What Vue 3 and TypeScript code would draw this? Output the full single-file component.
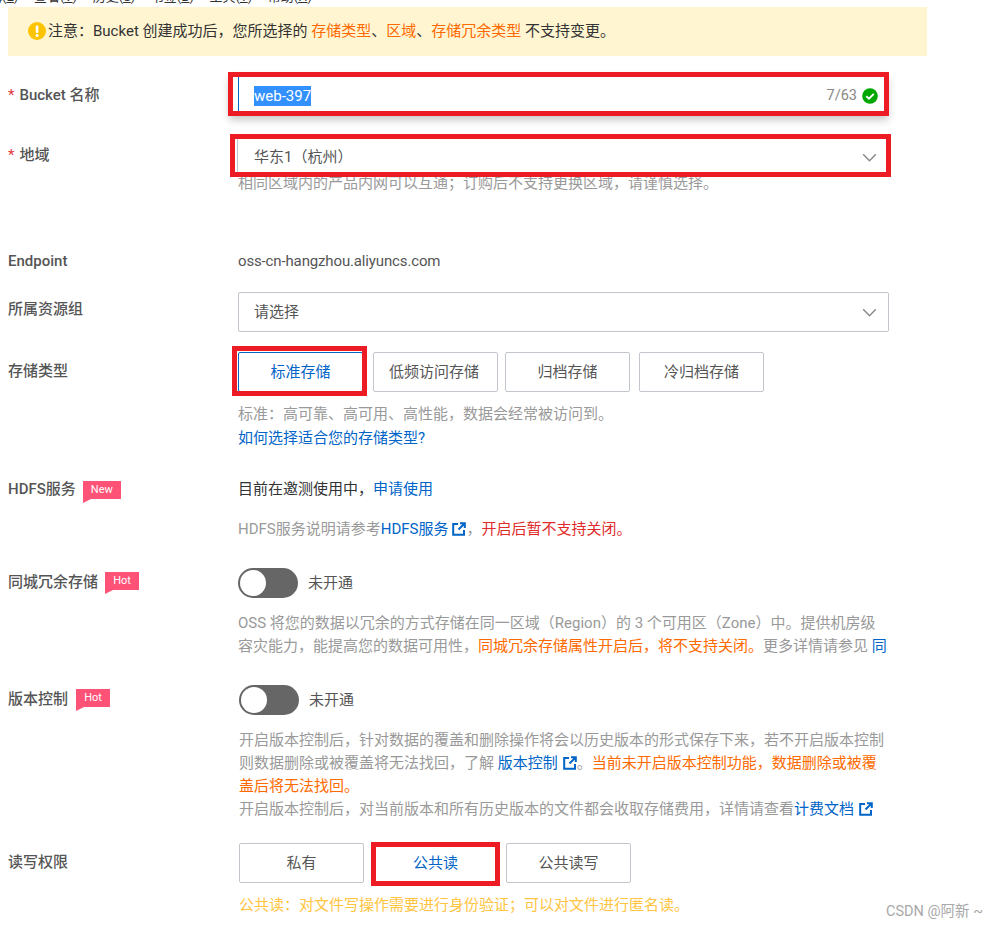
<script setup lang="ts">
const menus = [
  ['编辑', 'E'],
  ['查看', 'V'],
  ['历史', 'S'],
  ['书签', 'B'],
  ['工具', 'T'],
  ['帮助', 'H'],
]
const storageTypes = ['标准存储', '低频访问存储', '归档存储', '冷归档存储']
const permissions = ['私有', '公共读', '公共读写']
</script>

<template>
  <div class="page">
    <div class="menu">
      <span v-for="m in menus" :key="m[0]">{{ m[0] }}(<u>{{ m[1] }}</u>)</span>
    </div>
    <div class="alert">
      <svg class="warn" viewBox="0 0 18 18" width="18" height="18">
        <circle cx="9" cy="9" r="9" fill="#fcc400" />
        <rect x="7.8" y="3.4" width="2.6" height="7.6" rx="1" fill="#fff" />
        <circle cx="9.1" cy="13.4" r="1.5" fill="#fff" />
      </svg>
      <span>注意：Bucket 创建成功后，您所选择的 <em>存储类型</em>、<em>区域</em>、<em>存储冗余类型</em> 不支持变更。</span>
    </div>

    <div class="row r-name">
      <label class="label"><i>*</i> Bucket 名称</label>
      <div class="field">
        <div class="box name-box">
          <span class="selected">web-397</span>
          <span class="count">7/63</span>
          <svg viewBox="0 0 16 16" width="16" height="16">
            <circle cx="8" cy="8" r="7.8" fill="#00a700" />
            <path d="M4.3 8.2 7 10.7 11.8 5.9" fill="none" stroke="#fff" stroke-width="2" />
          </svg>
        </div>
      </div>
    </div>

    <div class="row r-region">
      <label class="label"><i>*</i> 地域</label>
      <div class="field">
        <div class="box region-box">
          <span>华东1（杭州）</span>
          <svg class="chev" viewBox="0 0 16 10"><path d="M1 1.5 8 8.5 15 1.5" fill="none" stroke="#888" stroke-width="1.6" /></svg>
        </div>
        <p class="help region-help">相同区域内的产品内网可以互通；订购后不支持更换区域，请谨慎选择。</p>
      </div>
    </div>

    <div class="row r-endpoint">
      <label class="label">Endpoint</label>
      <div class="field endpoint">oss-cn-hangzhou.aliyuncs.com</div>
    </div>

    <div class="row r-group">
      <label class="label">所属资源组</label>
      <div class="field">
        <div class="box group-box">
          <span>请选择</span>
          <svg class="chev" viewBox="0 0 16 10"><path d="M1 1.5 8 8.5 15 1.5" fill="none" stroke="#888" stroke-width="1.6" /></svg>
        </div>
      </div>
    </div>

    <div class="row r-storage">
      <label class="label">存储类型</label>
      <div class="field">
        <div class="btns storage">
          <button v-for="(t, i) in storageTypes" :key="t" class="btn" :class="{ on: i === 0 }">{{ t }}</button>
        </div>
        <p class="help storage-help">标准：高可靠、高可用、高性能，数据会经常被访问到。</p>
        <p class="help how"><a>如何选择适合您的存储类型?</a></p>
      </div>
    </div>

    <div class="row r-hdfs">
      <label class="label">HDFS服务<span class="tag tag-new">New</span></label>
      <div class="field">
        <p class="dark">目前在邀测使用中，<a>申请使用</a></p>
        <p class="help hdfs-help">HDFS服务说明请参考<a>HDFS服务</a>
          <svg class="ext" viewBox="0 0 14 14" width="14" height="14"><path d="M6 2H1.2v10.8H12V8M8 1.2h4.8V6M12.4 1.6 6.5 7.5" fill="none" stroke="#0064c8" stroke-width="2" /></svg>，<b class="red">开启后暂不支持关闭。</b>
        </p>
      </div>
    </div>

    <div class="row r-zrs">
      <label class="label">同城冗余存储<span class="tag tag-hot">Hot</span></label>
      <div class="field">
        <div class="toggle-row"><span class="toggle"><span class="knob"></span></span><span>未开通</span></div>
        <p class="help toggle-help clip">OSS 将您的数据以冗余的方式存储在同一区域（Region）的 3 个可用区（Zone）中。提供机房级容灾能力，能提高您的数据可用性，<b class="orange">同城冗余存储属性开启后，将不支持关闭。</b>更多详情请参见 <a>同城冗余存储</a></p>
      </div>
    </div>

    <div class="row r-version">
      <label class="label">版本控制<span class="tag tag-hot">Hot</span></label>
      <div class="field">
        <div class="toggle-row"><span class="toggle"><span class="knob"></span></span><span>未开通</span></div>
        <p class="help toggle-help">开启版本控制后，针对数据的覆盖和删除操作将会以历史版本的形式保存下来，若不开启版本控制则数据删除或被覆盖将无法找回，了解 <a>版本控制</a>
          <svg class="ext" viewBox="0 0 14 14" width="14" height="14"><path d="M6 2H1.2v10.8H12V8M8 1.2h4.8V6M12.4 1.6 6.5 7.5" fill="none" stroke="#0064c8" stroke-width="2" /></svg>。<b class="orange">当前未开启版本控制功能，数据删除或被覆盖后将无法找回。</b></p>
        <p class="help">开启版本控制后，对当前版本和所有历史版本的文件都会收取存储费用，详情请查看<a>计费文档</a>
          <svg class="ext" viewBox="0 0 14 14" width="14" height="14"><path d="M6 2H1.2v10.8H12V8M8 1.2h4.8V6M12.4 1.6 6.5 7.5" fill="none" stroke="#0064c8" stroke-width="2" /></svg></p>
      </div>
    </div>

    <div class="row r-perm">
      <label class="label">读写权限</label>
      <div class="field">
        <div class="btns perm">
          <button v-for="(t, i) in permissions" :key="t" class="btn" :class="{ on: i === 1 }">{{ t }}</button>
        </div>
        <p class="help yellow">公共读：对文件写操作需要进行身份验证；可以对文件进行匿名读。</p>
      </div>
    </div>

    <div class="watermark">CSDN @阿新 ~</div>
  </div>
</template>

<style scoped>
.page { position: relative; width: 997px; height: 927px; overflow: hidden; background: #fff; color: #333; font: 15px/23px Roboto, "Noto Sans CJK SC", sans-serif; }
.menu { height: 7px; display: flex; gap: 15.5px; margin-left: -24px; overflow: hidden; font-size: 13px; line-height: 13px; color: #333; white-space: nowrap; }
.menu span { display: block; margin-top: -10px; }
.alert { margin-left: 8px; width: 919px; height: 49px; background: #fff5d1; display: flex; align-items: center; gap: 2px; padding: 0 0 1px 20px; box-sizing: border-box; }
.alert em { font-style: normal; color: #ff6a00; }
.warn { flex: none; }
.row { display: grid; grid-template-columns: 230px 1fr; padding-left: 8px; }
.label { font-weight: 500; color: #555; white-space: nowrap; display: flex; align-items: flex-start; }
.label i { font-style: normal; color: #e4393c; font-weight: 400; margin-right: 5px; }
.box { position: relative; height: 38px; width: 651px; box-sizing: border-box; display: flex; align-items: center; padding: 0 10px 0 16px; }
.box > span:first-child { flex: 1; }
.chev { width: 15px; height: 9px; flex: none; }
.r-name { margin-top: 21px; height: 62px; }
.r-name .label { padding-top: 7px; }
.name-box { height: 34px; margin-left: -5px; outline: 5px solid #ed1c24; box-shadow: 0 5px 8px 4px rgba(0,0,0,.22); background: #fff; color: #888; padding: 3px 6px 0 21px; gap: 5px; }
.name-box::before { content: ""; position: absolute; left: 5px; top: 0; bottom: 0; width: 1px; background: #0064c8; }
.name-box .selected { flex: none !important; background: #3390ff; color: #fff; line-height: 20px; margin-right: auto; }
.count { font-size: 14.5px; }
.r-region { height: 111px; }
.r-region .label { padding-top: 5px; }
.region-box { height: 33px; margin-left: -3px; outline: 5px solid #ed1c24; color: #555; padding: 3px 9px 0 19px; }
.region-box::before { content: ""; position: absolute; left: 2px; top: 0; bottom: 0; width: 1px; background: #c0c6cc; }
.region-help { margin-top: 15px; }
.help { margin: 0; color: #999; white-space: normal; }
.help a, .dark a { color: #0064c8; }
.r-endpoint { height: 42px; }
.endpoint { color: #555; letter-spacing: -.14px; }
.r-group { height: 60px; }
.r-group .label { padding-top: 6px; }
.group-box { border: 1px solid #c0c6cc; border-radius: 2px; height: 40px; color: #555; padding: 0 11px 0 15px; }
.r-storage { height: 126px; }
.r-storage .label { padding-top: 8px; }
.btns { display: flex; }
.btn { position: relative; width: 125px; height: 40px; flex: none; box-sizing: border-box; background: #fff; border: 1px solid #c0c6cc; border-radius: 2px; font: inherit; color: #555; padding: 0; }
.btn.on { color: #0064c8; border-color: #0064c8; }
.btn.on::after { content: ""; position: absolute; box-sizing: border-box; border: 5px solid #ed1c24; }
.storage .btn.on::after { left: -7px; right: -5px; top: -7px; bottom: -5px; }
.perm .btn.on::after { left: -3px; right: -3px; top: -2px; bottom: -4px; }
.storage .btn:nth-child(2) { margin-left: 10px; padding-right: 3px; }
.storage .btn:nth-child(3) { margin-left: 7px; }
.storage .btn:nth-child(4) { margin-left: 9px; }
.perm .btn:nth-child(2) { margin-left: 9px; }
.perm .btn:nth-child(3) { margin-left: 8px; }
.storage-help { margin-top: 11px; }
.how { margin-top: 1px; }
.r-hdfs { height: 90px; }
.tag { display: inline-block; position: relative; margin: 1px 0 0 7px; background: #ff5277; color: #fff; font-size: 11px; font-weight: 400; line-height: 18px; height: 18px; text-align: center; }
.tag-new { width: 38px; margin-top: 3px; }
.tag-hot { width: 34px; }
.r-version .tag { margin-left: 8px; }
.tag::after { content: ""; position: absolute; left: 0; top: 18px; border-top: 4px solid #ff5277; border-right: 8px solid transparent; }
.dark { margin: 0; color: #333; }
.hdfs-help { margin-top: 17px; }
.ext { vertical-align: -2px; margin: 0 1px 0 3px; }
.r-version .ext { margin: 0 0 0 5px; }
.red { font-weight: 400; color: #e02b2b; }
.orange { font-weight: 400; color: #ff6a00; }
.r-zrs { height: 117px; }
.r-zrs .label, .r-version .label { padding-top: 3px; }
.toggle-row { display: flex; align-items: center; gap: 10px; color: #555; height: 30px; }
.toggle { width: 60px; height: 30px; border-radius: 15px; background: #666; position: relative; display: block; }
.knob { position: absolute; left: 2px; top: 2px; width: 26px; height: 26px; border-radius: 50%; background: #fff; }
.toggle-help { margin-top: 14px; }
.clip { height: 46px; overflow: hidden; width: 651px; }
.r-version { height: 158px; }
.r-version .field { margin-left: 1px; }
.r-version .help { width: 650px; }
.r-perm .label { padding-top: 8px; }
.r-perm .field { margin-left: 1px; }
.yellow { margin-top: 11px; color: #ffc440; }
.watermark { position: absolute; right: 14px; top: 903px; font-size: 14.5px; line-height: 18px; color: #a8a8a8; }
</style>
